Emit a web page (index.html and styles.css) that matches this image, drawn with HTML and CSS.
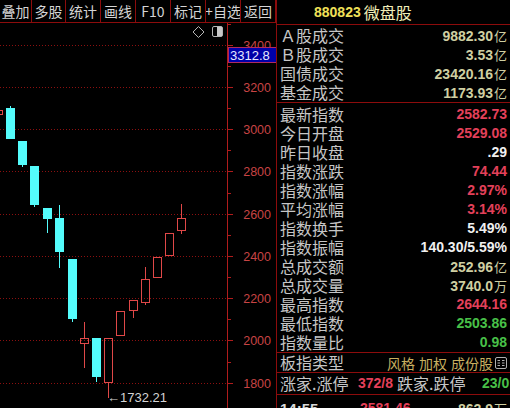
FILE: index.html
```html
<!DOCTYPE html>
<html>
<head>
<meta charset="utf-8">
<link rel="stylesheet" href="styles.css">
</head>
<body>
<div class="screen">
  <div class="left">
    <div class="toolbar">
      <div class="tb w31">叠加</div>
      <div class="tb w33">多股</div>
      <div class="tb">统计</div>
      <div class="tb">画线</div>
      <div class="tb">F10</div>
      <div class="tb">标记</div>
      <div class="tb">+自选</div>
      <div class="tb">返回</div>
    </div>
    <svg class="chart" viewBox="0 23 276 385" width="276" height="385">
      <g class="grid">
        <line x1="0" y1="45.5" x2="227" y2="45.5"/>
        <line x1="0" y1="87.5" x2="227" y2="87.5"/>
        <line x1="0" y1="129.5" x2="227" y2="129.5"/>
        <line x1="0" y1="171.5" x2="227" y2="171.5"/>
        <line x1="0" y1="214.5" x2="227" y2="214.5"/>
        <line x1="0" y1="256.5" x2="227" y2="256.5"/>
        <line x1="0" y1="298.5" x2="227" y2="298.5"/>
        <line x1="0" y1="340.5" x2="227" y2="340.5"/>
        <line x1="0" y1="383.5" x2="227" y2="383.5"/>
      </g>
      <g class="axis">
        <line x1="227.5" y1="23" x2="227.5" y2="408"/>
        <line x1="227" y1="45.5" x2="233" y2="45.5"/>
        <line x1="227" y1="87.5" x2="233" y2="87.5"/>
        <line x1="227" y1="129.5" x2="233" y2="129.5"/>
        <line x1="227" y1="171.5" x2="233" y2="171.5"/>
        <line x1="227" y1="214.5" x2="233" y2="214.5"/>
        <line x1="227" y1="256.5" x2="233" y2="256.5"/>
        <line x1="227" y1="298.5" x2="233" y2="298.5"/>
        <line x1="227" y1="340.5" x2="233" y2="340.5"/>
        <line x1="227" y1="383.5" x2="233" y2="383.5"/>
        <line x1="227" y1="66.5" x2="231" y2="66.5"/>
        <line x1="227" y1="108.5" x2="231" y2="108.5"/>
        <line x1="227" y1="150.5" x2="231" y2="150.5"/>
        <line x1="227" y1="193.5" x2="231" y2="193.5"/>
        <line x1="227" y1="235.5" x2="231" y2="235.5"/>
        <line x1="227" y1="277.5" x2="231" y2="277.5"/>
        <line x1="227" y1="319.5" x2="231" y2="319.5"/>
        <line x1="227" y1="362.5" x2="231" y2="362.5"/>
        <line x1="227" y1="24.5" x2="231" y2="24.5"/>
      </g>
      <g class="ylab">
        <text x="271" y="50">3400</text>
        <text x="271" y="92">3200</text>
        <text x="271" y="134">3000</text>
        <text x="271" y="176">2800</text>
        <text x="271" y="219">2600</text>
        <text x="271" y="261">2400</text>
        <text x="271" y="303">2200</text>
        <text x="271" y="345">2000</text>
        <text x="271" y="388">1800</text>
      </g>
      <rect class="curbox" x="228.5" y="47.5" width="48" height="15"/>
      <text class="curtxt" x="230" y="60">3312.8</text>
      <polygon class="ico" points="198.5,26.5 204,32 198.5,37.5 193,32"/>
      <rect class="ico" x="212.5" y="26.5" width="10" height="10" rx="1.5"/>
      <rect class="icofill" x="217" y="27" width="5" height="9"/>
      <g class="dn">
        <rect x="6" y="108" width="9" height="31"/>
        <line x1="10.5" y1="106" x2="10.5" y2="108"/>
        <rect x="18" y="141" width="9" height="24"/>
        <line x1="22.5" y1="165" x2="22.5" y2="167"/>
        <rect x="30" y="166" width="9" height="39"/>
        <line x1="34.5" y1="205" x2="34.5" y2="207"/>
        <rect x="43" y="208" width="9" height="11"/>
        <line x1="47.5" y1="219" x2="47.5" y2="233"/>
        <rect x="55" y="218" width="9" height="34"/>
        <line x1="59.5" y1="205" x2="59.5" y2="268"/>
        <rect x="68" y="259" width="9" height="60"/>
        <line x1="72.5" y1="319" x2="72.5" y2="322"/>
        <rect x="92" y="338" width="9" height="39"/>
        <line x1="96.5" y1="377" x2="96.5" y2="382"/>
      </g>
      <g class="up">
        <rect x="-4.5" y="110.5" width="7" height="4"/>
        <rect x="80.5" y="338.5" width="8" height="5"/>
        <line x1="84.5" y1="322" x2="84.5" y2="338"/>
        <line x1="84.5" y1="344" x2="84.5" y2="368"/>
        <rect x="104.5" y="338.5" width="8" height="44"/>
        <line x1="108.5" y1="383" x2="108.5" y2="398"/>
        <rect x="116.5" y="311.5" width="8" height="24"/>
        <rect x="129.5" y="300.5" width="8" height="10"/>
        <line x1="133.5" y1="311" x2="133.5" y2="318"/>
        <rect x="141.5" y="279.5" width="8" height="23"/>
        <line x1="145.5" y1="267" x2="145.5" y2="279"/>
        <line x1="145.5" y1="303" x2="145.5" y2="305"/>
        <rect x="153.5" y="257.5" width="8" height="20"/>
        <rect x="165.5" y="233.5" width="8" height="22"/>
        <rect x="177.5" y="218.5" width="8" height="12"/>
        <line x1="181.5" y1="204" x2="181.5" y2="218"/>
        <line x1="181.5" y1="231" x2="181.5" y2="234"/>
      </g>
      <text class="lowtxt" x="107" y="402">←1732.21</text>
    </svg>
  </div>
  <div class="panel">
    <div class="head"><span class="code">880823</span><span class="name">微盘股</span></div>
    <div class="group g1">
      <div class="row"><span class="lbl">Ａ股成交</span><span class="val khaki">9882.30<i>亿</i></span></div>
      <div class="row"><span class="lbl">Ｂ股成交</span><span class="val khaki">3.53<i>亿</i></span></div>
      <div class="row"><span class="lbl">国债成交</span><span class="val khaki">23420.16<i>亿</i></span></div>
      <div class="row"><span class="lbl">基金成交</span><span class="val khaki">1173.93<i>亿</i></span></div>
    </div>
    <div class="group g2">
      <div class="row"><span class="lbl">最新指数</span><span class="val red">2582.73</span></div>
      <div class="row"><span class="lbl">今日开盘</span><span class="val red">2529.08</span></div>
      <div class="row"><span class="lbl">昨日收盘</span><span class="val white">.29</span></div>
      <div class="row"><span class="lbl">指数涨跌</span><span class="val red">74.44</span></div>
      <div class="row"><span class="lbl">指数涨幅</span><span class="val red">2.97%</span></div>
      <div class="row"><span class="lbl">平均涨幅</span><span class="val red">3.14%</span></div>
      <div class="row"><span class="lbl">指数换手</span><span class="val white">5.49%</span></div>
      <div class="row"><span class="lbl">指数振幅</span><span class="val white">140.30/5.59%</span></div>
      <div class="row"><span class="lbl">总成交额</span><span class="val khaki">252.96<i>亿</i></span></div>
      <div class="row"><span class="lbl">总成交量</span><span class="val khaki">3740.0<i>万</i></span></div>
      <div class="row"><span class="lbl">最高指数</span><span class="val red">2644.16</span></div>
      <div class="row"><span class="lbl">最低指数</span><span class="val green">2503.86</span></div>
      <div class="row"><span class="lbl">指数量比</span><span class="val green">0.98</span></div>
    </div>
    <div class="group g3">
      <div class="row">
        <span class="lbl">板指类型</span>
        <span class="types"><span>风格</span><span>加权</span><span>成份股</span>
          <svg class="tblico" viewBox="0 0 12 12" width="12" height="12">
            <rect x="0.5" y="0.5" width="11" height="11" rx="1.5"/>
            <line x1="2.5" y1="3.5" x2="5" y2="3.5"/>
            <line x1="7" y1="3.5" x2="9.5" y2="3.5"/>
            <line x1="2.5" y1="6" x2="5" y2="6"/>
            <line x1="7" y1="6" x2="9.5" y2="6"/>
            <line x1="2.5" y1="8.5" x2="5" y2="8.5"/>
            <line x1="7" y1="8.5" x2="9.5" y2="8.5"/>
          </svg>
        </span>
      </div>
    </div>
    <div class="group g4">
      <div class="row">
        <span class="lbl c1">涨家.涨停</span>
        <span class="val red c2">372/8</span>
        <span class="lbl c3">跌家.跌停</span>
        <span class="val green c4">23/0</span>
      </div>
    </div>
    <div class="group g5">
      <div class="row">
        <span class="time">14:55</span>
        <span class="val red p2">2581.46</span>
        <span class="val khaki p3">862.9<i>万</i></span>
      </div>
    </div>
  </div>
</div>
</body>
</html>
```

FILE: styles.css
```css
html, body {
  margin: 0;
  padding: 0;
  background: #000;
}
body {
  width: 510px;
  height: 408px;
  overflow: hidden;
  font-family: "Noto Sans CJK SC", sans-serif;
}
.screen {
  display: flex;
  width: 510px;
  height: 408px;
  background: #000;
  overflow: hidden;
}
.left {
  width: 276px;
  display: flex;
  flex-direction: column;
  flex: none;
}
.toolbar {
  display: flex;
  height: 22px;
  border-bottom: 1px solid #8c0c0c;
}
.tb {
  width: 34px;
  height: 22px;
  border-right: 1px solid #8c0c0c;
  display: flex;
  align-items: center;
  justify-content: center;
  color: #d4d4d4;
  font-size: 14px;
  line-height: 22px;
  white-space: nowrap;
  overflow: hidden;
  flex: none;
}
.tb.w31 { width: 31px; }
.tb.w33 { width: 33px; }
.chart {
  display: block;
  width: 276px;
  height: 385px;
}
.grid line {
  stroke: #8c1010;
  stroke-width: 1;
  stroke-dasharray: 1 2;
}
.axis line {
  stroke: #b01c1c;
  stroke-width: 1;
}
.ylab text {
  font-family: "Liberation Sans", sans-serif;
  font-size: 12.5px;
  fill: #c84444;
  text-anchor: end;
}
.curbox {
  fill: #0000a8;
  stroke: #b02a60;
  stroke-width: 1;
}
.curtxt {
  font-family: "Liberation Sans", sans-serif;
  font-size: 13px;
  fill: #e6e6ff;
}
.ico {
  fill: none;
  stroke: #b4b4b4;
  stroke-width: 1;
}
.icofill {
  fill: #c8c8c8;
}
.dn rect { fill: #54fcfc; }
.dn line { stroke: #54fcfc; stroke-width: 1; }
.up rect { fill: none; stroke: #e04848; stroke-width: 1; }
.up line { stroke: #e04848; stroke-width: 1; }
.lowtxt {
  font-family: "Liberation Sans", sans-serif;
  font-size: 13px;
  fill: #d4d4d4;
}
.panel {
  width: 233px;
  flex: none;
  border-left: 1px solid #8c0c0c;
  display: flex;
  flex-direction: column;
}
.head {
  border-bottom: 1px solid #8c0c0c;
  display: flex;
  align-items: center;
  padding-left: 37px;
  box-sizing: border-box;
  height: 30px;
}
.code {
  font-family: "Liberation Sans", sans-serif;
  font-weight: bold;
  font-size: 14px;
  color: #f0e058;
  margin-right: 3px;
}
.name {
  font-size: 16px;
  color: #f0eeb8;
}
.group {
  border-bottom: 1px solid #8c0c0c;
}
.g1 { padding-top: 1px; }
.g2 { padding-top: 2px; }
.g5 { border-bottom: none; }
.row {
  height: 19px;
  display: flex;
  align-items: center;
  justify-content: space-between;
  padding: 0 3px;
  white-space: nowrap;
}
.lbl {
  font-size: 16px;
  color: #c6c6c6;
  line-height: 19px;
}
.val {
  font-family: "Liberation Sans", sans-serif;
  font-weight: bold;
  font-size: 14px;
  line-height: 19px;
}
.val i {
  font-style: normal;
  font-weight: normal;
  font-family: "Noto Sans CJK SC", sans-serif;
  font-size: 13px;
  margin-left: 1px;
}
.khaki { color: #cfcfa2; }
.red { color: #e4405a; }
.white { color: #f0f0f0; }
.green { color: #48c048; }
.types {
  display: flex;
  align-items: center;
  font-size: 14px;
  color: #c8b060;
}
.types span { margin-left: 4px; }
.tblico {
  margin-left: 2px;
  display: block;
}
.tblico rect, .tblico line {
  fill: none;
  stroke: #b0b0b0;
  stroke-width: 1;
}
.g4 .row {
  height: 21px;
  justify-content: flex-start;
}
.c1 { width: 78px; flex: none; }
.c2 { width: 39px; flex: none; }
.c3 { width: 85px; flex: none; }
.c4 { flex: none; }
.g5 .row {
  justify-content: flex-start;
  align-items: flex-start;
  height: 20px;
  padding-top: 4px;
}
.time {
  font-family: "Liberation Sans", sans-serif;
  font-weight: bold;
  font-size: 15px;
  line-height: 19px;
  color: #d8d8d8;
  width: 80px;
  flex: none;
}
.p2 { width: 97px; flex: none; }
.p3 { margin-left: auto; }
```
